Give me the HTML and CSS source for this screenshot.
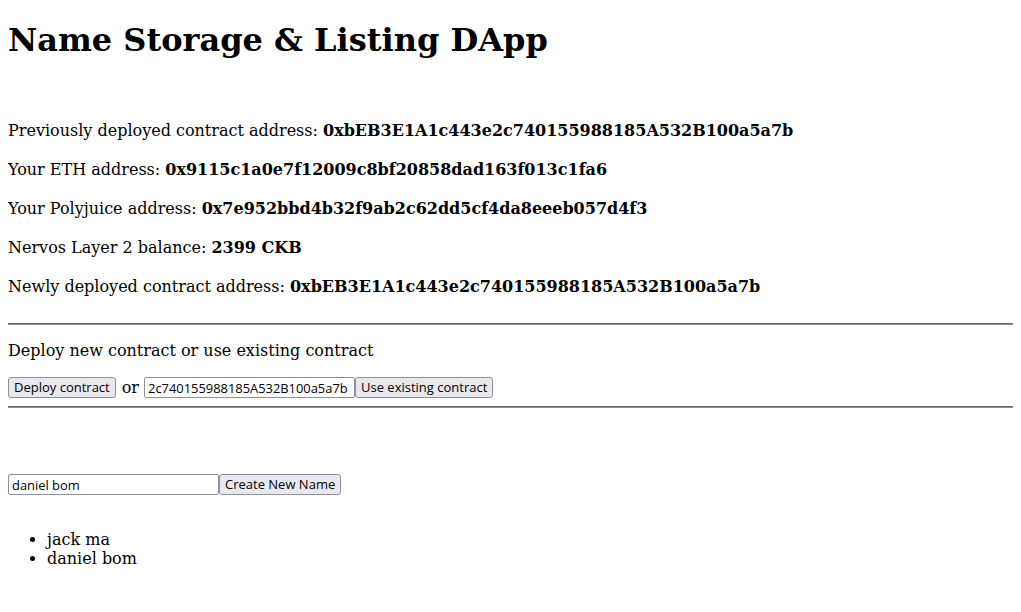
FILE: index.html
```html
<!DOCTYPE html>
<html>
<head>
<meta charset="utf-8">
<title>Name Storage &amp; Listing DApp</title>
<link rel="stylesheet" href="styles.css">
</head>
<body>
<h1 class="title">Name Storage &amp; Listing DApp</h1>
<div class="gap-top"></div>
<div class="info">
  <p class="line">Previously deployed contract address: <b>0xbEB3E1A1c443e2c740155988185A532B100a5a7b</b></p>
  <p class="line">Your ETH address: <b>0x9115c1a0e7f12009c8bf20858dad163f013c1fa6</b></p>
  <p class="line">Your Polyjuice address: <b>0x7e952bbd4b32f9ab2c62dd5cf4da8eeeb057d4f3</b></p>
  <p class="line">Nervos Layer 2 balance: <b>2399 CKB</b></p>
  <p class="line">Newly deployed contract address: <b>0xbEB3E1A1c443e2c740155988185A532B100a5a7b</b></p>
</div>
<div class="rule rule-first"></div>
<p class="deploy-label">Deploy new contract or use existing contract</p>
<div class="controls">
  <button class="btn">Deploy contract</button><span class="or">or</span><input class="field" type="text" value="2c740155988185A532B100a5a7b"><button class="btn">Use existing contract</button>
</div>
<div class="rule rule-second"></div>
<div class="create">
  <input class="field" type="text" value="daniel bom"><button class="btn">Create New Name</button>
</div>
<ul class="names">
  <li>jack ma</li>
  <li>daniel bom</li>
</ul>
</body>
</html>
```
FILE: styles.css
```css
html {
  background: #fff;
  color: #000;
}
body {
  margin: 8px;
  font-family: "DejaVu Serif", serif;
  font-size: 16px;
  line-height: 19px;
}
.title {
  font-size: 32px;
  line-height: 38px;
  margin: 13px 0 0;
  font-weight: bold;
}
.gap-top {
  height: 62px;
}
.info {
  display: flex;
  flex-direction: column;
  gap: 20px;
}
.line {
  margin: 0;
}
.rule {
  border-top: 1px solid #6a6a6a;
  border-bottom: 1px solid #8c8c8c;
  height: 0;
  margin-right: -8px;
}
.rule-first {
  margin-top: 27px;
}
.deploy-label {
  margin: 16px 0 0;
}
.controls {
  display: flex;
  align-items: center;
  margin-top: 17px;
}
.or {
  margin: 0 5px 0 6px;
}
.btn {
  font-family: "Open Sans", "DejaVu Sans", sans-serif;
  font-size: 13px;
  height: 21px;
  padding: 0 5px;
  background: #e9e9ed;
  border: 1px solid #8f8f9d;
  border-radius: 3px;
  color: #000;
  line-height: 19px;
}
.field {
  font-family: "Open Sans", "DejaVu Sans", sans-serif;
  font-size: 12.9px;
  width: 211px;
  height: 21px;
  box-sizing: border-box;
  padding: 0 3px;
  border: 1px solid #8f8f9d;
  border-radius: 2px;
  background: #fff;
  color: #000;
}
.rule-second {
  margin-top: 8px;
}
.create {
  display: flex;
  align-items: center;
  margin-top: 66px;
}
.names {
  margin: 35px 0 0;
  padding-left: 39px;
  font-size: 16px;
  line-height: 19px;
}
```
